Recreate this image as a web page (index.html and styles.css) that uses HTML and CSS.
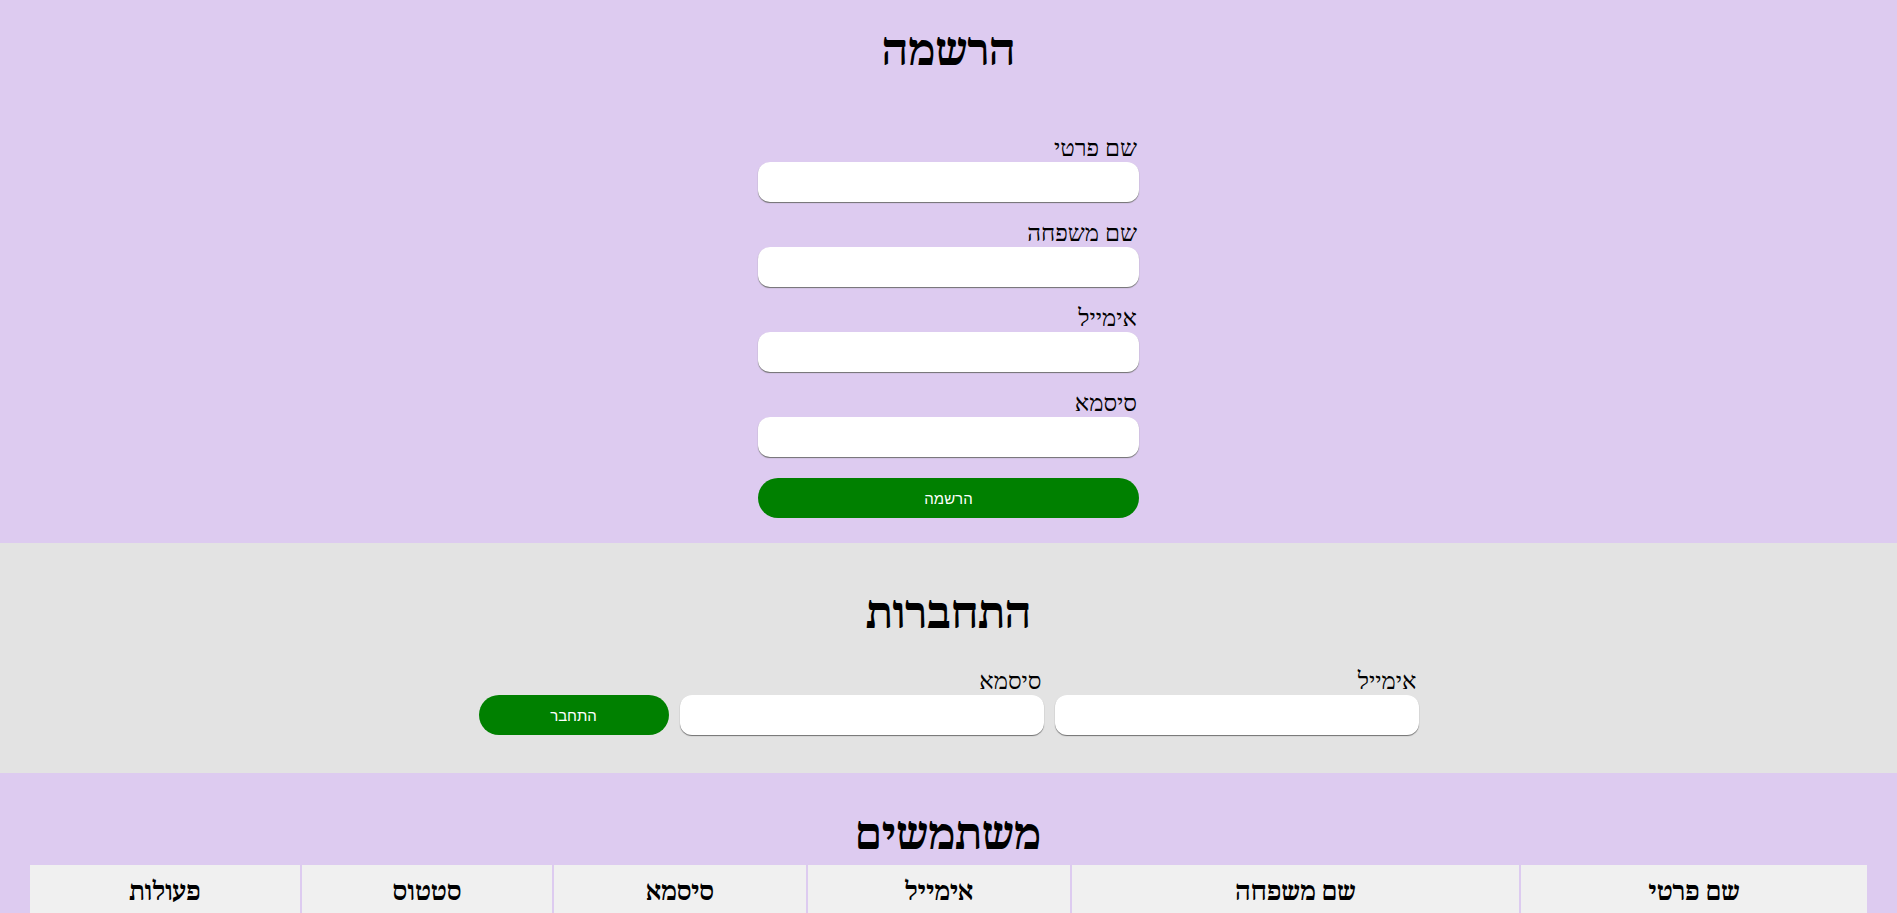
FILE: index.html
```html
<!DOCTYPE html>
<html lang="he" dir="rtl">
<head>
<meta charset="utf-8">
<title>הרשמה</title>
<link rel="stylesheet" href="styles.css">
</head>
<body>
<section class="panel panel-register">
  <h1 class="title title-register">הרשמה</h1>
  <form class="reg-form">
    <label class="field">
      <span class="field-label">שם פרטי</span>
      <input class="text-input" type="text">
    </label>
    <label class="field">
      <span class="field-label">שם משפחה</span>
      <input class="text-input" type="text">
    </label>
    <label class="field">
      <span class="field-label">אימייל</span>
      <input class="text-input" type="email">
    </label>
    <label class="field">
      <span class="field-label">סיסמא</span>
      <input class="text-input" type="password">
    </label>
    <button class="btn btn-register" type="button">הרשמה</button>
  </form>
</section>

<section class="panel panel-login">
  <h1 class="title title-login">התחברות</h1>
  <form class="login-row">
    <label class="login-field">
      <span class="field-label">אימייל</span>
      <input class="text-input" type="email">
    </label>
    <label class="login-field">
      <span class="field-label">סיסמא</span>
      <input class="text-input" type="password">
    </label>
    <button class="btn btn-login" type="button">התחבר</button>
  </form>
</section>

<section class="panel panel-users">
  <h1 class="title title-users">משתמשים</h1>
  <table class="users-table">
    <thead>
      <tr>
        <th class="col-first">שם פרטי</th>
        <th class="col-last">שם משפחה</th>
        <th class="col-email">אימייל</th>
        <th class="col-pass">סיסמא</th>
        <th class="col-status">סטטוס</th>
        <th class="col-actions">פעולות</th>
      </tr>
    </thead>
    <tbody></tbody>
  </table>
</section>
</body>
</html>
```
FILE: styles.css
```css
html, body {
  margin: 0;
  padding: 0;
}

body {
  font-family: "Liberation Serif", "Times New Roman", serif;
  color: #000;
  background: #ddcbf0;
}

.panel {
  display: flex;
  flex-direction: column;
  align-items: center;
}

.panel-register {
  background: #ddcbf0;
  padding-bottom: 25px;
}

.panel-login {
  background: #e3e3e3;
  padding-bottom: 38px;
}

.panel-users {
  background: #ddcbf0;
}

.title {
  font-family: "Noto Serif Hebrew", "Liberation Serif", serif;
  font-size: 43px;
  font-weight: bold;
  line-height: 55px;
  margin: 0;
}

.title-register {
  margin: 24px 0 55px;
}

.title-login {
  margin: 44px 0 25px;
}

.title-users {
  margin: 35px 0 0;
}

.reg-form {
  display: flex;
  flex-direction: column;
  width: 381px;
}

.field {
  display: flex;
  flex-direction: column;
  margin-bottom: 17px;
}

.field-label {
  font-size: 24px;
  line-height: 28px;
  height: 28px;
  padding-right: 2px;
}

.text-input {
  box-sizing: border-box;
  height: 40px;
  width: 100%;
  border: none;
  border-radius: 12px;
  background: #fff;
  box-shadow: 0 1px 1px #6f6f6f;
  outline: none;
  padding: 0 12px;
  font-size: 16px;
}

.btn {
  box-sizing: border-box;
  height: 40px;
  border: none;
  border-radius: 20px;
  background: #008000;
  color: #fff;
  font-family: "Liberation Sans", Arial, sans-serif;
  font-size: 15px;
  cursor: pointer;
}

.btn-register {
  width: 100%;
  margin-top: 4px;
}

.login-row {
  display: flex;
  align-items: flex-end;
  justify-content: center;
  gap: 11px;
}

.login-field {
  display: flex;
  flex-direction: column;
  width: 364px;
}

.btn-login {
  width: 190px;
}

.users-table {
  width: 1841px;
  border-spacing: 2px;
  margin: 0 auto;
  table-layout: fixed;
}

.users-table th {
  font-family: "Noto Serif Hebrew", "Liberation Serif", serif;
  background: #f0f0f0;
  font-size: 25px;
  font-weight: bold;
  line-height: 28px;
  padding: 14px 4px;
  text-align: center;
}

.col-first { width: 338px; }
.col-last { width: 439px; }
.col-email { width: 254px; }
.col-pass { width: 244px; }
.col-status { width: 242px; }
.col-actions { width: 262px; }
```
